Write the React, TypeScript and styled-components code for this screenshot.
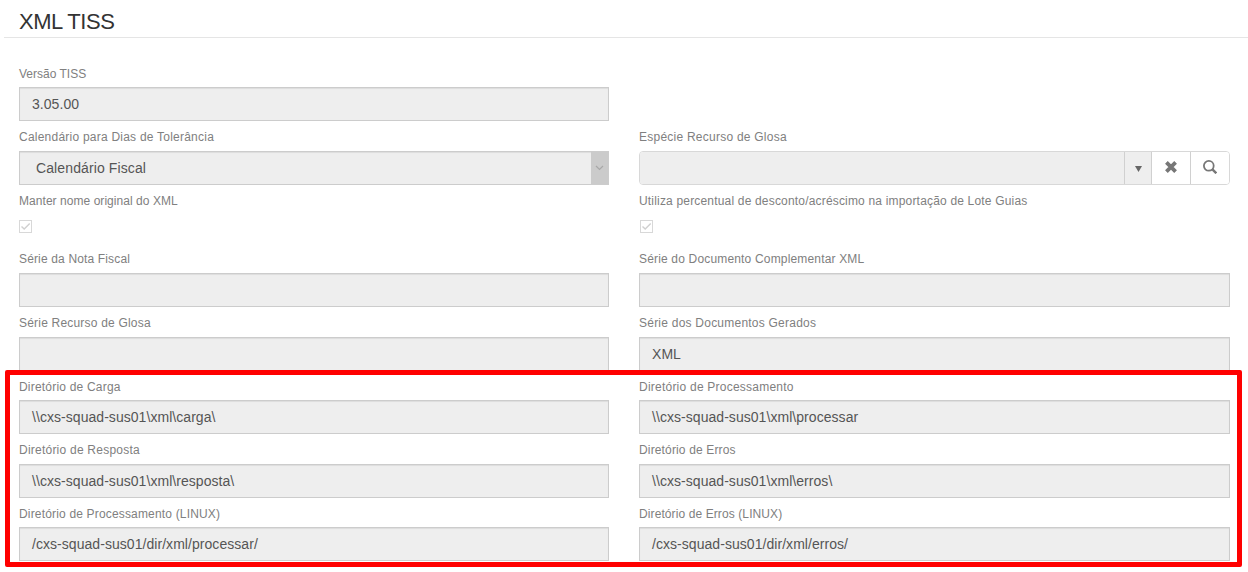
import React from 'react';
import styled, { createGlobalStyle } from 'styled-components';

const GlobalStyle = createGlobalStyle`
  * { box-sizing: border-box; }
  body {
    margin: 0;
    background: #fff;
    font-family: "Liberation Sans", Arial, sans-serif;
    overflow: hidden;
  }
`;

const Page = styled.main`
  position: relative;
  width: 1248px;
  height: 572px;
`;

const Header = styled.header`
  height: 38px;
  margin-left: 4px;
  padding: 9px 0 0 15px;
  border-bottom: 1px solid #e5e5e5;
`;

const Title = styled.h1`
  margin: 0;
  font-size: 22px;
  line-height: 25px;
  font-weight: 400;
  letter-spacing: -0.45px;
  color: #333;
`;

const Form = styled.form`
  display: grid;
  grid-template-columns: 590px 591px;
  grid-template-rows: 64px 64px 58px 64px 63px 64px 63px 64px;
  column-gap: 30px;
  padding: 27px 0 0 19px;
`;

const Field = styled.div<{ $wide?: boolean }>`
  display: flex;
  flex-direction: column;
  ${(p) => p.$wide && 'grid-column: 1 / -1; width: 590px;'}
`;

const Label = styled.label<{ $spacing?: number; $low?: boolean }>`
  height: 22px;
  padding-top: ${(p) => (p.$low ? 1 : 0)}px;
  font-size: 12px;
  line-height: 17px;
  color: #808080;
  white-space: nowrap;
  letter-spacing: ${(p) => p.$spacing ?? 0.2}px;
`;

const TextBox = styled.div`
  height: 34px;
  padding: 0 12px;
  border: 1px solid #ccc;
  background: #eee;
  box-shadow: inset 0 1px 1px rgba(0, 0, 0, 0.075);
  font-size: 14px;
  line-height: 33px;
  letter-spacing: 0.05px;
  color: #555;
  white-space: nowrap;
`;

const SelectBox = styled(TextBox)`
  display: flex;
  justify-content: space-between;
  padding: 0 0 0 16px;
  letter-spacing: 0.11px;
`;

const SelectArrow = styled.span`
  display: flex;
  align-items: center;
  justify-content: center;
  width: 17px;
  background: #cbcbcb;
`;

const Lookup = styled.div`
  display: flex;
  height: 34px;
  border: 1px solid #d8d8d8;
  border-radius: 4px;
  overflow: hidden;
`;

const LookupInput = styled.div`
  flex: 1;
  background: #eee;
`;

const LookupButton = styled.span<{ $width: number; $filled?: boolean }>`
  display: flex;
  align-items: center;
  justify-content: center;
  width: ${(p) => p.$width}px;
  padding: ${(p) => (p.$filled ? '2px 0 0' : '0 0 2px')};
  border-left: 1px solid #d0d0d0;
  background: ${(p) => (p.$filled ? '#eee' : '#fff')};
`;

const CheckBox = styled.span<{ $inset?: boolean }>`
  display: flex;
  align-items: center;
  justify-content: center;
  width: 13px;
  height: 13px;
  margin-top: 5px;
  margin-left: ${(p) => (p.$inset ? 0.5 : 0)}px;
  border: 1px solid #d8d8d8;
`;

const Highlight = styled.div`
  position: absolute;
  left: 5px;
  top: 370px;
  width: 1237px;
  height: 197px;
  border: 5px solid #f00;
  border-radius: 2px;
  pointer-events: none;
`;

interface FieldProps {
  label: string;
  value?: string;
  wide?: boolean;
  spacing?: number;
  low?: boolean;
  inset?: boolean;
}

const TextField = ({ label, value, wide, spacing, low }: FieldProps) => (
  <Field $wide={wide}>
    <Label $spacing={spacing} $low={low}>{label}</Label>
    <TextBox>{value}</TextBox>
  </Field>
);

const CheckField = ({ label, spacing, inset }: FieldProps) => (
  <Field>
    <Label $spacing={spacing}>{label}</Label>
    <CheckBox $inset={inset}>
      <svg width="11" height="11" viewBox="0 0 11 11" fill="none" stroke="#d0d0d0" strokeWidth="1.4">
        <path d="M1.5 5.5 4.2 8.1 9.7 2.6" />
      </svg>
    </CheckBox>
  </Field>
);

export default function App() {
  return (
    <Page>
      <GlobalStyle />
      <Header>
        <Title>XML TISS</Title>
      </Header>
      <Form>
        <TextField wide low spacing={0} label="Versão TISS" value="3.05.00" />
        <Field>
          <Label $spacing={0.23}>Calendário para Dias de Tolerância</Label>
          <SelectBox>
            Calendário Fiscal
            <SelectArrow>
              <svg width="9" height="6" viewBox="0 0 9 6" fill="none" stroke="#a8a8a8" strokeWidth="1.2">
                <path d="M1 1 4.5 4.5 8 1" />
              </svg>
            </SelectArrow>
          </SelectBox>
        </Field>
        <Field>
          <Label $spacing={0.24}>Espécie Recurso de Glosa</Label>
          <Lookup>
            <LookupInput />
            <LookupButton $width={27} $filled>
              <svg width="7" height="6" viewBox="0 0 7 6" fill="#666">
                <path d="M0 0h7L3.5 6z" />
              </svg>
            </LookupButton>
            <LookupButton $width={39}>
              <svg width="12" height="12" viewBox="0 0 12 12" fill="none" stroke="#777" strokeWidth="3.8">
                <path d="M1.4 1.4 10.6 10.6M10.6 1.4 1.4 10.6" />
              </svg>
            </LookupButton>
            <LookupButton $width={39}>
              <svg width="14" height="14" viewBox="0 0 14 14" fill="none" stroke="#777">
                <circle cx="5.8" cy="5.8" r="4.9" strokeWidth="1.8" />
                <path d="M9.2 9.2 13.3 13.3" strokeWidth="2.4" />
              </svg>
            </LookupButton>
          </Lookup>
        </Field>
        <CheckField spacing={0.05} label="Manter nome original do XML" />
        <CheckField inset spacing={0.18} label="Utiliza percentual de desconto/acréscimo na importação de Lote Guias" />
        <TextField spacing={0.15} label="Série da Nota Fiscal" />
        <TextField spacing={0.17} label="Série do Documento Complementar XML" />
        <TextField label="Série Recurso de Glosa" />
        <TextField spacing={0.23} label="Série dos Documentos Gerados" value="XML" />
        <TextField low label="Diretório de Carga" value="\\cxs-squad-sus01\xml\carga\" />
        <TextField low spacing={0.23} label="Diretório de Processamento" value="\\cxs-squad-sus01\xml\processar" />
        <TextField spacing={0.23} label="Diretório de Resposta" value="\\cxs-squad-sus01\xml\resposta\" />
        <TextField spacing={0.15} label="Diretório de Erros" value="\\cxs-squad-sus01\xml\erros\" />
        <TextField low spacing={0.17} label="Diretório de Processamento (LINUX)" value="/cxs-squad-sus01/dir/xml/processar/" />
        <TextField low spacing={0.1} label="Diretório de Erros (LINUX)" value="/cxs-squad-sus01/dir/xml/erros/" />
      </Form>
      <Highlight />
    </Page>
  );
}
